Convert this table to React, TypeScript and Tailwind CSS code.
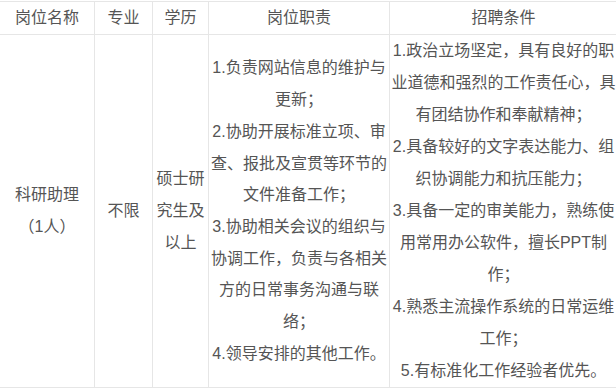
const duties = [
  "1.负责网站信息的维护与",
  "更新；",
  "2.协助开展标准立项、审",
  "查、报批及宣贯等环节的",
  "文件准备工作；",
  "3.协助相关会议的组织与",
  "协调工作，负责与各相关",
  "方的日常事务沟通与联",
  "络；",
  "4.领导安排的其他工作。",
];

const requirements = [
  "1.政治立场坚定，具有良好的职",
  "业道德和强烈的工作责任心，具",
  "有团结协作和奉献精神；",
  "2.具备较好的文字表达能力、组",
  "织协调能力和抗压能力；",
  "3.具备一定的审美能力，熟练使",
  "用常用办公软件，擅长PPT制",
  "作；",
  "4.熟悉主流操作系统的日常运维",
  "工作；",
  "5.有标准化工作经验者优先。",
];

function Lines({ items }: { items: string[] }) {
  return (
    <>
      {items.map((t, i) => (
        <div key={i} className="whitespace-nowrap">
          {t}
        </div>
      ))}
    </>
  );
}

export default function App() {
  const cell = "border border-[#e6e6e6] text-center align-middle p-0 font-normal";
  return (
    <div className="w-[616px] h-[389px] overflow-hidden bg-white">
      <table
        className="mt-px -ml-px w-[618px] table-fixed border-collapse text-[16px] leading-8 text-[#555]"
        style={{ fontFamily: '"Liberation Sans", "Noto Sans CJK SC", sans-serif' }}
      >
        <colgroup>
          <col className="w-[95px]" />
          <col className="w-[58px]" />
          <col className="w-[56px]" />
          <col className="w-[181px]" />
          <col className="w-[228px]" />
        </colgroup>
        <thead>
          <tr className="h-[33px]">
            <th className={cell}>岗位名称</th>
            <th className={cell}>专业</th>
            <th className={cell}>学历</th>
            <th className={cell}>岗位职责</th>
            <th className={cell}>招聘条件</th>
          </tr>
        </thead>
        <tbody>
          <tr className="h-[352px]">
            <td className={cell}>
              <Lines items={["科研助理", "（1人）"]} />
            </td>
            <td className={cell}>不限</td>
            <td className={cell}>
              <Lines items={["硕士研", "究生及", "以上"]} />
            </td>
            <td className={cell}>
              <div className="leading-[31.7px]">
                <Lines items={duties} />
              </div>
            </td>
            <td className={cell}>
              <Lines items={requirements} />
            </td>
          </tr>
        </tbody>
      </table>
    </div>
  );
}
